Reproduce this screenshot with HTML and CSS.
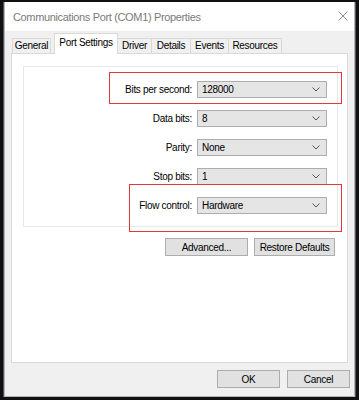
FILE: index.html
```html
<!DOCTYPE html>
<html lang="en">
<head>
    <meta charset="UTF-8">
    <meta name="viewport" content="width=device-width, initial-scale=1.0">
    <title>Communications Port (COM1) Properties</title>
    <link rel="stylesheet" href="styles.css">
</head>
<body>
    <div class="screen">
        <div class="dialog">
            <div class="titlebar">
                <span class="title">Communications Port (COM1) Properties</span>
                <svg class="close" width="10" height="10" viewBox="0 0 10 10">
                    <path d="M0.5 0.5 L9.5 9.5 M9.5 0.5 L0.5 9.5" stroke="#8a8a8a" stroke-width="1" fill="none"/>
                </svg>
            </div>
            <div class="body">
                <div class="tabs">
                    <div class="tab tab-general">General</div>
                    <div class="tab tab-port selected">Port Settings</div>
                    <div class="tab tab-driver">Driver</div>
                    <div class="tab tab-details">Details</div>
                    <div class="tab tab-events">Events</div>
                    <div class="tab tab-resources">Resources</div>
                </div>
                <div class="panel">
                    <div class="group">
                        <div class="form">
                            <label>Bits per second:</label>
                            <div class="combo"><span>128000</span><svg width="8" height="5" viewBox="0 0 8 5"><path d="M0.5 0.5 L4 4 L7.5 0.5" stroke="#555" fill="none"/></svg></div>
                            <label>Data bits:</label>
                            <div class="combo"><span>8</span><svg width="8" height="5" viewBox="0 0 8 5"><path d="M0.5 0.5 L4 4 L7.5 0.5" stroke="#555" fill="none"/></svg></div>
                            <label>Parity:</label>
                            <div class="combo"><span>None</span><svg width="8" height="5" viewBox="0 0 8 5"><path d="M0.5 0.5 L4 4 L7.5 0.5" stroke="#555" fill="none"/></svg></div>
                            <label>Stop bits:</label>
                            <div class="combo"><span>1</span><svg width="8" height="5" viewBox="0 0 8 5"><path d="M0.5 0.5 L4 4 L7.5 0.5" stroke="#555" fill="none"/></svg></div>
                            <label>Flow control:</label>
                            <div class="combo"><span>Hardware</span><svg width="8" height="5" viewBox="0 0 8 5"><path d="M0.5 0.5 L4 4 L7.5 0.5" stroke="#555" fill="none"/></svg></div>
                        </div>
                    </div>
                    <div class="panel-buttons">
                        <button class="btn btn-advanced">Advanced...</button>
                        <button class="btn btn-restore">Restore Defaults</button>
                    </div>
                    <!-- red highlight boxes drawn over the form -->
                    <div class="mark mark-bits"></div>
                    <div class="mark mark-flow"></div>
                </div>
                <div class="dialog-buttons">
                    <button class="btn btn-ok">OK</button>
                    <button class="btn btn-cancel">Cancel</button>
                </div>
            </div>
        </div>
    </div>
</body>
</html>
```

FILE: styles.css
```css
* {
    box-sizing: border-box;
}

body {
    margin: 0;
    font-family: "Liberation Sans", Arial, sans-serif;
    font-size: 10px;
    letter-spacing: -0.3px;
    color: #000;
    background: #fff;
}

.screen {
    width: 359px;
    height: 400px;
    border-style: solid;
    border-color: #101010;
    border-width: 2px 3px 3px 3px;
    padding: 0 1px;
    background: #4a5668;
}

.dialog {
    height: 395px;
    border: 1px solid #b4b4b4;
    border-top: none;
    background: #f0f0f0;
}

/* Title bar */
.titlebar {
    height: 29px;
    background: #fff;
    display: flex;
    align-items: center;
    justify-content: space-between;
    padding: 0 6px 0 8px;
}

.title {
    font-size: 11px;
    letter-spacing: -0.35px;
    color: #7a7a7a;
    white-space: nowrap;
}

.close {
    display: block;
    margin-top: -1px;
}

/* Tabs */
.body {
    padding-top: 2px;
}

.tabs {
    display: flex;
    align-items: flex-end;
    height: 20px;
    margin-left: 7px;
    position: relative;
    z-index: 1;
}

.tab {
    height: 15px;
    border: 1px solid #d9d9d9;
    border-bottom: none;
    background: #f0f0f0;
    margin-right: -1px;
    text-align: center;
    line-height: 14px;
    white-space: nowrap;
}

.tab-general { width: 39px; margin-right: 3px; }
.tab-port { width: 64px; }
.tab-driver { width: 35px; }
.tab-details { width: 40px; }
.tab-events { width: 39px; }
.tab-resources { width: 54px; }

.tab.selected {
    height: 21px;
    margin-bottom: -1px;
    background: #fff;
    line-height: 18px;
    position: relative;
    z-index: 2;
}

/* Tab panel */
.panel {
    position: relative;
    width: 337px;
    height: 310px;
    margin-left: 6px;
    border: 1px solid #d9d9d9;
    background: #fff;
    padding: 12px 0 0 11px;
}

.group {
    width: 315px;
    height: 161px;
    border: 1px solid #e8e8e8;
}

.form {
    display: grid;
    grid-template-columns: 1fr 130px;
    column-gap: 5px;
    row-gap: 12px;
    padding: 14px 10px 0 0;
}

.form label {
    text-align: right;
    line-height: 17px;
    white-space: nowrap;
}

.combo {
    height: 17px;
    border: 1px solid #adadad;
    background: #e5e5e5;
    display: flex;
    align-items: center;
    justify-content: space-between;
    padding: 0 6px 0 4px;
}

.combo svg {
    display: block;
}

.panel-buttons {
    display: flex;
    justify-content: flex-end;
    gap: 6px;
    margin-top: 11px;
    padding-right: 12px;
}

.btn {
    height: 18px;
    border: 1px solid #adadad;
    background: #e1e1e1;
    font-family: inherit;
    font-size: 10px;
    letter-spacing: -0.3px;
    color: #000;
    padding: 0;
    white-space: nowrap;
}

.btn-advanced { width: 83px; }
.btn-restore { width: 81px; }

/* red highlight boxes */
.mark {
    position: absolute;
    border: 1px solid #e2383c;
}

.mark-bits {
    left: 97px;
    top: 18px;
    width: 233px;
    height: 32px;
}

.mark-flow {
    left: 117px;
    top: 130px;
    width: 213px;
    height: 48px;
}

/* OK / Cancel */
.dialog-buttons {
    display: flex;
    justify-content: flex-end;
    gap: 7px;
    margin-top: 7px;
    padding-right: 4px;
}

.btn-ok,
.btn-cancel {
    width: 63px;
}
```
